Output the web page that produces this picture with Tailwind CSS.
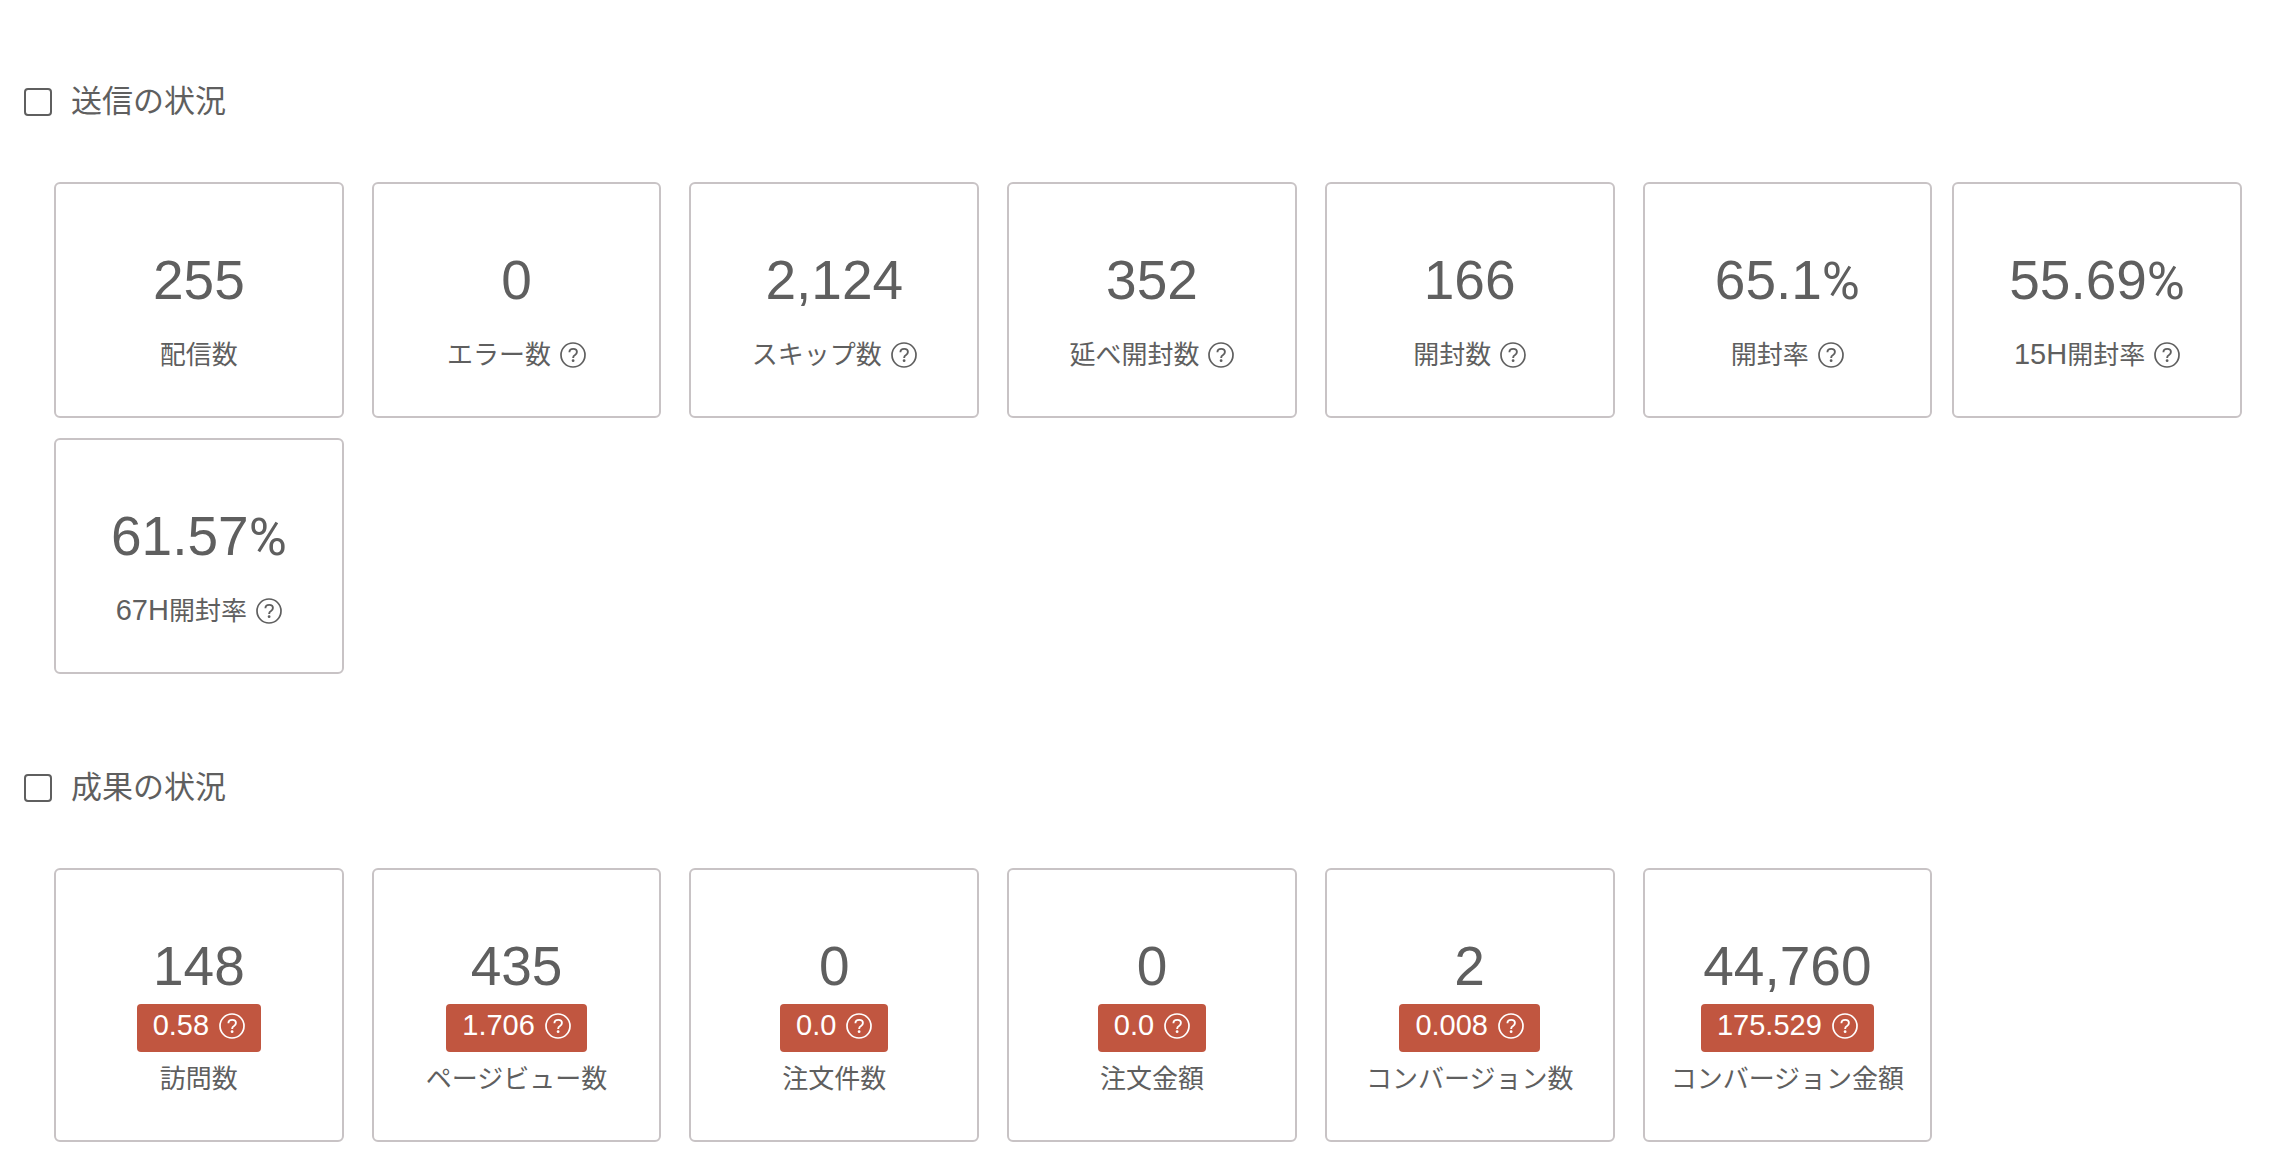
<!DOCTYPE html>
<html lang="ja">
<head>
    <meta charset="UTF-8">
    <meta name="viewport" content="width=device-width, initial-scale=1.0">
    <title>配信レポート</title>
    <script src="https://cdn.jsdelivr.net/npm/@tailwindcss/browser@4"></script>
</head>
<body class="bg-white font-['Liberation_Sans','Noto_Sans_CJK_JP',sans-serif] text-[#5f5f5f]">
    <!-- shared help icon -->
    <svg class="hidden">
        <symbol id="help" viewBox="0 0 26 26">
            <circle cx="13" cy="13" r="12" fill="none" stroke="currentColor" stroke-width="1.7"/>
            <path d="M9.4 10.2c.1-2 1.6-3.3 3.8-3.3 2.2 0 3.7 1.3 3.7 3.1 0 1.4-.7 2.2-1.9 3-1.3.8-1.8 1.4-1.8 2.6v.4" fill="none" stroke="currentColor" stroke-width="1.9"/>
            <circle cx="13.1" cy="18.7" r="1.4" fill="currentColor"/>
        </symbol>
    </svg>

    <main class="px-6 pt-[78px]">
        <section>
            <label class="flex items-center gap-[19px] text-[31px] leading-[48px]">
                <input type="checkbox" class="size-7 appearance-none rounded-[4px] border-2 border-[#5f5f5f] bg-white checked:bg-[#5f5f5f]">
                <h2>送信の状況</h2>
            </label>
            <div class="mx-[30px] mt-14 flex flex-wrap gap-y-5 text-center">
                <div class="mr-7 w-[calc((100%-160px)/7)] rounded-md border-2 border-[#c8c3c5] pt-[66px] pb-[41px]">
                    <p class="text-[55px] leading-[60px]">255</p>
                    <p class="mt-[25px] text-[26px] leading-10">配信数</p>
                </div>
                <div class="mr-7 w-[calc((100%-160px)/7)] rounded-md border-2 border-[#c8c3c5] pt-[66px] pb-[41px]">
                    <p class="text-[55px] leading-[60px]">0</p>
                    <div class="mt-[25px] flex items-center justify-center gap-[9px] text-[26px] leading-10">
                        <span>エラー数</span>
                        <button type="button" aria-label="エラー数とは"><svg class="size-[26px]"><use href="#help"/></svg></button>
                    </div>
                </div>
                <div class="mr-7 w-[calc((100%-160px)/7)] rounded-md border-2 border-[#c8c3c5] pt-[66px] pb-[41px]">
                    <p class="text-[55px] leading-[60px]">2,124</p>
                    <div class="mt-[25px] flex items-center justify-center gap-[9px] text-[26px] leading-10">
                        <span>スキップ数</span>
                        <button type="button" aria-label="スキップ数とは"><svg class="size-[26px]"><use href="#help"/></svg></button>
                    </div>
                </div>
                <div class="mr-7 w-[calc((100%-160px)/7)] rounded-md border-2 border-[#c8c3c5] pt-[66px] pb-[41px]">
                    <p class="text-[55px] leading-[60px]">352</p>
                    <div class="mt-[25px] flex items-center justify-center gap-[9px] text-[26px] leading-10">
                        <span>延べ開封数</span>
                        <button type="button" aria-label="延べ開封数とは"><svg class="size-[26px]"><use href="#help"/></svg></button>
                    </div>
                </div>
                <div class="mr-7 w-[calc((100%-160px)/7)] rounded-md border-2 border-[#c8c3c5] pt-[66px] pb-[41px]">
                    <p class="text-[55px] leading-[60px]">166</p>
                    <div class="mt-[25px] flex items-center justify-center gap-[9px] text-[26px] leading-10">
                        <span>開封数</span>
                        <button type="button" aria-label="開封数とは"><svg class="size-[26px]"><use href="#help"/></svg></button>
                    </div>
                </div>
                <div class="mr-5 w-[calc((100%-160px)/7)] rounded-md border-2 border-[#c8c3c5] pt-[66px] pb-[41px]">
                    <p class="text-[55px] leading-[60px]">65.1<span class="font-[Roboto] text-[52px] leading-none">%</span></p>
                    <div class="mt-[25px] flex items-center justify-center gap-[9px] text-[26px] leading-10">
                        <span>開封率</span>
                        <button type="button" aria-label="開封率とは"><svg class="size-[26px]"><use href="#help"/></svg></button>
                    </div>
                </div>
                <div class="w-[calc((100%-160px)/7)] rounded-md border-2 border-[#c8c3c5] pt-[66px] pb-[41px]">
                    <p class="text-[55px] leading-[60px]">55.69<span class="font-[Roboto] text-[52px] leading-none">%</span></p>
                    <div class="mt-[25px] flex items-center justify-center gap-[9px] text-[26px] leading-10">
                        <span><span class="text-[29px] leading-none">15H</span>開封率</span>
                        <button type="button" aria-label="15H開封率とは"><svg class="size-[26px]"><use href="#help"/></svg></button>
                    </div>
                </div>
                <div class="w-[calc((100%-160px)/7)] rounded-md border-2 border-[#c8c3c5] pt-[66px] pb-[41px]">
                    <p class="text-[55px] leading-[60px]">61.57<span class="font-[Roboto] text-[52px] leading-none">%</span></p>
                    <div class="mt-[25px] flex items-center justify-center gap-[9px] text-[26px] leading-10">
                        <span><span class="text-[29px] leading-none">67H</span>開封率</span>
                        <button type="button" aria-label="67H開封率とは"><svg class="size-[26px]"><use href="#help"/></svg></button>
                    </div>
                </div>
            </div>
        </section>

        <section class="mt-[90px]">
            <label class="flex items-center gap-[19px] text-[31px] leading-[48px]">
                <input type="checkbox" class="size-7 appearance-none rounded-[4px] border-2 border-[#5f5f5f] bg-white checked:bg-[#5f5f5f]">
                <h2>成果の状況</h2>
            </label>
            <div class="mx-[30px] mt-14 flex flex-wrap gap-y-5 text-center">
                <div class="mr-7 flex w-[calc((100%-160px)/7)] flex-col items-center rounded-md border-2 border-[#c8c3c5] pt-[66px] pb-[41px]">
                    <p class="text-[55px] leading-[60px]">148</p>
                    <div class="mt-2 flex h-12 items-center gap-2.5 rounded bg-[#c15640] px-4 pb-1 text-[29px] text-white">
                        <span>0.58</span>
                        <button type="button" aria-label="訪問数の割合とは"><svg class="size-[26px]"><use href="#help"/></svg></button>
                    </div>
                    <p class="mt-[7px] text-[26px] leading-10">訪問数</p>
                </div>
                <div class="mr-7 flex w-[calc((100%-160px)/7)] flex-col items-center rounded-md border-2 border-[#c8c3c5] pt-[66px] pb-[41px]">
                    <p class="text-[55px] leading-[60px]">435</p>
                    <div class="mt-2 flex h-12 items-center gap-2.5 rounded bg-[#c15640] px-4 pb-1 text-[29px] text-white">
                        <span>1.706</span>
                        <button type="button" aria-label="ページビュー数の割合とは"><svg class="size-[26px]"><use href="#help"/></svg></button>
                    </div>
                    <p class="mt-[7px] text-[26px] leading-10">ページビュー数</p>
                </div>
                <div class="mr-7 flex w-[calc((100%-160px)/7)] flex-col items-center rounded-md border-2 border-[#c8c3c5] pt-[66px] pb-[41px]">
                    <p class="text-[55px] leading-[60px]">0</p>
                    <div class="mt-2 flex h-12 items-center gap-2.5 rounded bg-[#c15640] px-4 pb-1 text-[29px] text-white">
                        <span>0.0</span>
                        <button type="button" aria-label="注文件数の割合とは"><svg class="size-[26px]"><use href="#help"/></svg></button>
                    </div>
                    <p class="mt-[7px] text-[26px] leading-10">注文件数</p>
                </div>
                <div class="mr-7 flex w-[calc((100%-160px)/7)] flex-col items-center rounded-md border-2 border-[#c8c3c5] pt-[66px] pb-[41px]">
                    <p class="text-[55px] leading-[60px]">0</p>
                    <div class="mt-2 flex h-12 items-center gap-2.5 rounded bg-[#c15640] px-4 pb-1 text-[29px] text-white">
                        <span>0.0</span>
                        <button type="button" aria-label="注文金額の割合とは"><svg class="size-[26px]"><use href="#help"/></svg></button>
                    </div>
                    <p class="mt-[7px] text-[26px] leading-10">注文金額</p>
                </div>
                <div class="mr-7 flex w-[calc((100%-160px)/7)] flex-col items-center rounded-md border-2 border-[#c8c3c5] pt-[66px] pb-[41px]">
                    <p class="text-[55px] leading-[60px]">2</p>
                    <div class="mt-2 flex h-12 items-center gap-2.5 rounded bg-[#c15640] px-4 pb-1 text-[29px] text-white">
                        <span>0.008</span>
                        <button type="button" aria-label="コンバージョン数の割合とは"><svg class="size-[26px]"><use href="#help"/></svg></button>
                    </div>
                    <p class="mt-[7px] text-[26px] leading-10">コンバージョン数</p>
                </div>
                <div class="flex w-[calc((100%-160px)/7)] flex-col items-center rounded-md border-2 border-[#c8c3c5] pt-[66px] pb-[41px]">
                    <p class="text-[55px] leading-[60px]">44,760</p>
                    <div class="mt-2 flex h-12 items-center gap-2.5 rounded bg-[#c15640] px-4 pb-1 text-[29px] text-white">
                        <span>175.529</span>
                        <button type="button" aria-label="コンバージョン金額の割合とは"><svg class="size-[26px]"><use href="#help"/></svg></button>
                    </div>
                    <p class="mt-[7px] text-[26px] leading-10">コンバージョン金額</p>
                </div>
            </div>
        </section>
    </main>
</body>
</html>
